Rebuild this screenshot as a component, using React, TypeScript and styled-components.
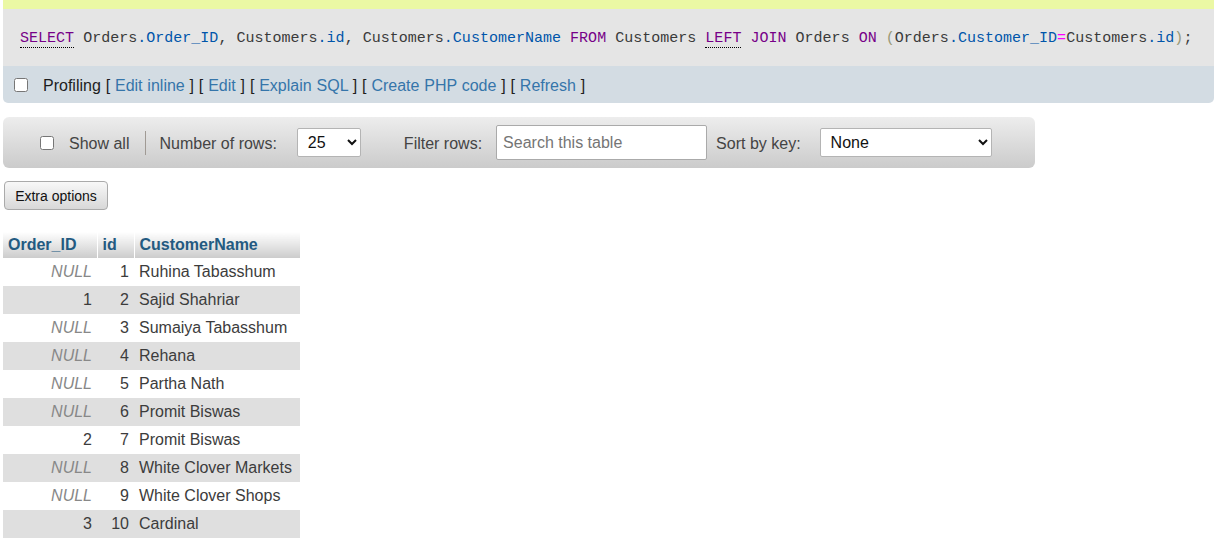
import React from "react";
import styled, { createGlobalStyle } from "styled-components";

const GlobalStyle = createGlobalStyle`
  html, body { margin: 0; padding: 0; background: #fff; }
  body {
    font-family: "Liberation Sans", Arial, sans-serif;
    font-size: 16px;
    color: #444;
    overflow: hidden;
  }
`;

const Page = styled.div`
  padding-left: 3px;
`;

const MessageTail = styled.div`
  height: 9px;
  background: #ebf8a4;
`;

const QueryBox = styled.div`
  background: #e5e5e5;
  padding: 20px 17px 17px;
  font-family: "Liberation Mono", monospace;
  font-size: 15px;
  line-height: 20px;
  letter-spacing: 0.015px;
  color: #3a3a3a;
  white-space: pre;
`;

type Kind = "plain" | "kw" | "kwdoc" | "var" | "br" | "op";

const colors: Record<Kind, string> = {
  plain: "#3a3a3a",
  kw: "#770088",
  kwdoc: "#770088",
  var: "#0055aa",
  br: "#999977",
  op: "#ff00ff",
};

const Tok = styled.span<{ $kind: Kind }>`
  color: ${(p) => colors[p.$kind]};
  ${(p) => (p.$kind === "kwdoc" ? "border-bottom: 1px dotted #000;" : "")}
`;

const tokens: [string, Kind][] = [
  ["SELECT", "kwdoc"],
  [" Orders", "plain"],
  [".Order_ID", "var"],
  [", Customers", "plain"],
  [".id", "var"],
  [", Customers", "plain"],
  [".CustomerName", "var"],
  [" ", "plain"],
  ["FROM", "kw"],
  [" Customers ", "plain"],
  ["LEFT", "kwdoc"],
  [" ", "plain"],
  ["JOIN", "kw"],
  [" Orders ", "plain"],
  ["ON", "kw"],
  [" ", "plain"],
  ["(", "br"],
  ["Orders", "plain"],
  [".Customer_ID", "var"],
  ["=", "op"],
  ["Customers", "plain"],
  [".id", "var"],
  [")", "br"],
  [";", "plain"],
];

const ToolsBar = styled.div`
  display: flex;
  align-items: center;
  height: 37px;
  box-sizing: border-box;
  padding-left: 11px;
  background: #d3dce3;
  border-radius: 0 0 5px 5px;
  color: #1e1e1e;
`;

const Check = styled.input.attrs({ type: "checkbox" })`
  width: 14px;
  height: 14px;
  margin: 0;
  flex: none;
`;

const ToolsText = styled.span`
  margin-left: 15px;
  padding-top: 3px;
  white-space: pre;
  word-spacing: 0.4px;
`;

const ToolLink = styled.a`
  color: #3575aa;
  text-decoration: none;
`;

const NavBar = styled.div`
  display: flex;
  align-items: center;
  width: 1032px;
  height: 51px;
  box-sizing: border-box;
  margin-top: 14px;
  padding-left: 37px;
  background: linear-gradient(#ededed, #cbcbcb);
  border-radius: 6px;
`;

const NavText = styled.span<{ $ml: number }>`
  margin-left: ${(p) => p.$ml}px;
  padding-top: 3px;
  color: #444;
  white-space: nowrap;
`;

const Divider = styled.span`
  width: 1px;
  height: 24px;
  margin-left: 16px;
  background: #a09a94;
`;

const Select = styled.select<{ $w: number; $ml: number }>`
  width: ${(p) => p.$w}px;
  height: 29px;
  margin-left: ${(p) => p.$ml}px;
  font: 16px "Liberation Sans", Arial, sans-serif;
  color: #111;
  background: #fff;
  border: 1px solid #b4b4b4;
  border-radius: 2px;
  padding: 0 0 0 6px;
`;

const Search = styled.input`
  width: 211px;
  height: 35px;
  margin-left: 14px;
  box-sizing: border-box;
  border: 1px solid #aaa;
  border-radius: 2px;
  padding: 0 6px;
  font: 16px "Liberation Sans", Arial, sans-serif;
  color: #111;
  background: #fff;
  &::placeholder {
    color: #757575;
  }
`;

const Button = styled.button`
  display: block;
  margin: 13px 0 0 1px;
  width: 104px;
  height: 29px;
  padding: 0;
  font: 14px "Liberation Sans", Arial, sans-serif;
  color: #111;
  background: linear-gradient(#f8f8f8, #d8d8d8);
  border: 1px solid #aaa;
  border-radius: 4px;
`;

const Table = styled.table`
  margin-top: 22px;
  border-collapse: collapse;
  table-layout: fixed;
  width: 297px;
`;

const Th = styled.th<{ $w: number }>`
  width: ${(p) => p.$w}px;
  height: 26px;
  padding: 0 5px;
  box-sizing: border-box;
  text-align: left;
  font-weight: bold;
  color: #235a81;
  background: linear-gradient(#ffffff, #cccccc);
  border-right: 1px solid #fff;
  &:last-child {
    border-right: none;
  }
`;

const Tr = styled.tr<{ $even: boolean }>`
  background: ${(p) => (p.$even ? "#dfdfdf" : "#ffffff")};
`;

const Td = styled.td<{ $right?: boolean }>`
  height: 28px;
  padding: 0 5px;
  box-sizing: border-box;
  text-align: ${(p) => (p.$right ? "right" : "left")};
  color: #3c3c3c;
  white-space: nowrap;
`;

const Null = styled.i`
  color: #888;
`;

const rows: [number | null, number, string][] = [
  [null, 1, "Ruhina Tabasshum"],
  [1, 2, "Sajid Shahriar"],
  [null, 3, "Sumaiya Tabasshum"],
  [null, 4, "Rehana"],
  [null, 5, "Partha Nath"],
  [null, 6, "Promit Biswas"],
  [2, 7, "Promit Biswas"],
  [null, 8, "White Clover Markets"],
  [null, 9, "White Clover Shops"],
  [3, 10, "Cardinal"],
];

export default function App() {
  return (
    <>
      <GlobalStyle />
      <Page>
        <MessageTail />
        <QueryBox>
          {tokens.map(([t, k], i) => (
            <Tok key={i} $kind={k}>
              {t}
            </Tok>
          ))}
        </QueryBox>
        <ToolsBar>
          <Check />
          <ToolsText>
            Profiling [ <ToolLink href="#">Edit inline</ToolLink> ] [ <ToolLink href="#">Edit</ToolLink> ] [ <ToolLink href="#">Explain SQL</ToolLink> ] [ <ToolLink href="#">Create PHP code</ToolLink> ] [ <ToolLink href="#">Refresh</ToolLink> ]
          </ToolsText>
        </ToolsBar>
        <NavBar>
          <Check />
          <NavText $ml={15}>Show all</NavText>
          <Divider />
          <NavText $ml={13}>Number of rows:</NavText>
          <Select $w={64} $ml={20} defaultValue="25">
            <option>25</option>
            <option>50</option>
            <option>100</option>
          </Select>
          <NavText $ml={43}>Filter rows:</NavText>
          <Search placeholder="Search this table" />
          <NavText $ml={9}>Sort by key:</NavText>
          <Select $w={172} $ml={19} defaultValue="None">
            <option>None</option>
          </Select>
        </NavBar>
        <Button>Extra options</Button>
        <Table>
          <thead>
            <tr>
              <Th $w={94}>Order_ID</Th>
              <Th $w={37}>id</Th>
              <Th $w={166}>CustomerName</Th>
            </tr>
          </thead>
          <tbody>
            {rows.map(([oid, id, name], i) => (
              <Tr key={id} $even={i % 2 === 1}>
                <Td $right>{oid === null ? <Null>NULL</Null> : oid}</Td>
                <Td $right>{id}</Td>
                <Td>{name}</Td>
              </Tr>
            ))}
          </tbody>
        </Table>
      </Page>
    </>
  );
}
